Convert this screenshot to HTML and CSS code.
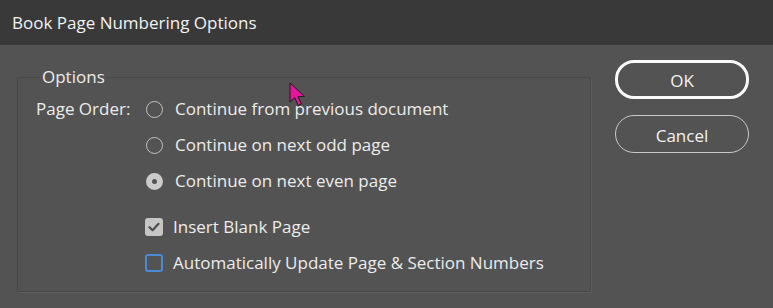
FILE: index.html
```html
<!DOCTYPE html>
<html lang="en">
<head>
  <meta charset="UTF-8" />
  <title>Book Page Numbering Options</title>
  <link rel="stylesheet" href="styles.css">
</head>
<body>
  <div class="dialog">
    <div class="title-bar">Book Page Numbering Options</div>

    <div class="dialog-body">
      <fieldset class="options-group">
        <legend>Options</legend>

        <div class="order-row">
          <span class="order-label">Page Order:</span>
          <div class="radio-list">
            <label class="radio"><span class="radio-mark"></span>Continue from previous document</label>
            <label class="radio"><span class="radio-mark"></span>Continue on next odd page</label>
            <label class="radio"><span class="radio-mark selected"></span>Continue on next even page</label>
          </div>
        </div>

        <div class="check-list">
          <label class="check">
            <span class="check-mark checked">
              <svg width="12" height="10" viewBox="0 0 12 10"><path d="M1.5 5.2 L4.6 8.2 L10.5 1.8" fill="none" stroke="#4d4d4d" stroke-width="2.2" stroke-linecap="round" stroke-linejoin="round"/></svg>
            </span>
            Insert Blank Page
          </label>
          <label class="check"><span class="check-mark focused"></span>Automatically Update Page &amp; Section Numbers</label>
        </div>
      </fieldset>

      <div class="buttons">
        <button class="btn default">OK</button>
        <button class="btn">Cancel</button>
      </div>
    </div>

    <svg class="cursor" width="20" height="26" viewBox="0 0 20 26">
      <path d="M1 1 L1 20 L5.8 15.8 L9.3 23.5 L12.4 22 L9 14.8 L15.5 14.3 Z" fill="#e4169b" stroke="#1a1a1a" stroke-width="1"/>
    </svg>
  </div>
</body>
</html>
```

FILE: styles.css
```css
* {
  margin: 0;
  padding: 0;
  box-sizing: border-box;
}

html, body {
  height: 100%;
  background: #535353;
  font-family: 'Open Sans', 'Noto Sans', sans-serif;
  color: #ececec;
  overflow: hidden;
}

.dialog {
  position: relative;
  height: 100%;
}

.title-bar {
  height: 45px;
  background: #393939;
  padding-left: 12px;
  font-size: 17px;
  line-height: 45px;
  color: #f2f2f2;
}

.dialog-body {
  display: flex;
  align-items: flex-start;
  padding: 15px 0 0 17px;
}

.options-group {
  margin-top: 8px;
  width: 574px;
  height: 224px;
  border: 1px solid #474747;
  border-radius: 2px;
  padding: 0 0 0 18px;
  box-shadow: 1px 1px 0 #5e5e5e;
}

.options-group legend {
  margin-left: 4px;
  padding: 0 2px;
  font-size: 17px;
  line-height: 18px;
}

.order-row {
  display: flex;
  margin-top: 14px;
}

.order-label {
  width: 110px;
  font-size: 17px;
  line-height: 18px;
}

.radio-list,
.check-list {
  display: flex;
  flex-direction: column;
  gap: 18px;
}

.check-list {
  margin: 28px 0 0 109px;
}

.radio,
.check {
  display: flex;
  align-items: center;
  font-size: 17px;
  line-height: 18px;
}

.radio-mark {
  width: 17px;
  height: 17px;
  margin-right: 12px;
  border: 1.5px solid #c4c4c4;
  border-radius: 50%;
}

.radio-mark.selected {
  border: 6px solid #cbcbcb;
  background: #555;
}

.check-mark {
  width: 18px;
  height: 18px;
  margin-right: 10px;
  border-radius: 3px;
  display: flex;
  align-items: center;
  justify-content: center;
}

.check-mark.checked {
  background: #c6c6c6;
}

.check-mark.focused {
  border: 2px solid #4a8bd6;
}

.buttons {
  display: flex;
  flex-direction: column;
  gap: 16px;
  margin-left: 24px;
}

.btn {
  width: 134px;
  height: 38px;
  padding-top: 2px;
  border: 1px solid #c8c8c8;
  border-radius: 19px;
  background: transparent;
  color: #f2f2f2;
  font-family: inherit;
  font-size: 17px;
}

.btn.default {
  height: 39px;
  border: 3px solid #fafafa;
}

.cursor {
  position: absolute;
  left: 289px;
  top: 82px;
}
```
